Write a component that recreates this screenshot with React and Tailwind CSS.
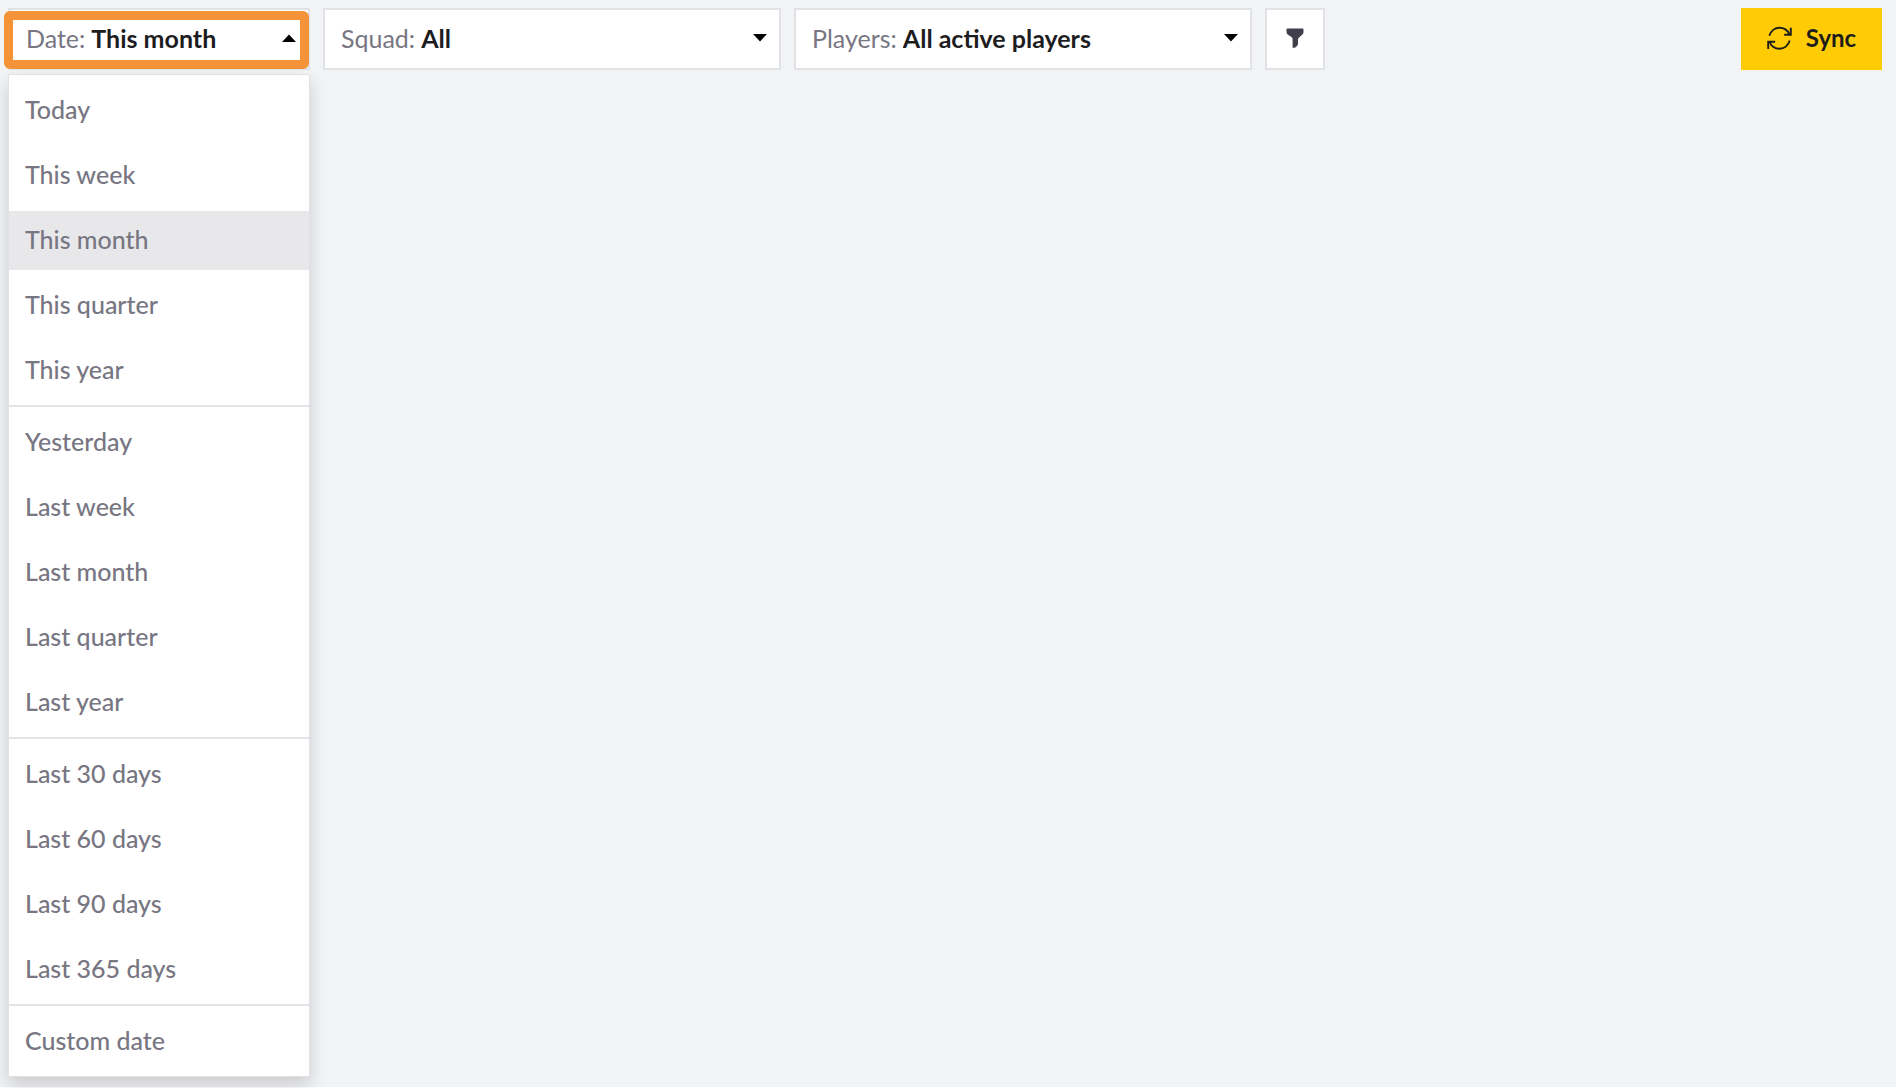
import { useState } from 'react'

const dateGroups = [
  ['Today', 'This week', 'This month', 'This quarter', 'This year'],
  ['Yesterday', 'Last week', 'Last month', 'Last quarter', 'Last year'],
  ['Last 30 days', 'Last 60 days', 'Last 90 days', 'Last 365 days'],
  ['Custom date'],
]

const Caret = ({ up }) => (
  <svg
    viewBox="0 0 14 8"
    className={up ? 'h-2 w-3.5 shrink-0 rotate-180' : 'pointer-events-none absolute right-3 h-2 w-3.5'}
    aria-hidden="true"
  >
    <path d="M0 0h14L7 7.5z" fill="#000" />
  </svg>
)

const FilterIcon = () => (
  <svg viewBox="0 0 18 20" className="h-5 w-[18px]" aria-hidden="true">
    <path
      d="M1.5 0.5h15q1 0 1 1v2.5q0 1.6-1.1 2.6l-3.6 3.2q-0.8 0.8-0.8 2v3.6q0 1.6-1 2.5l-1.4 1.3q-0.8 0.6-1.8 0.6H6.6v-8.5q0-1.2-0.8-2L1.7 6.6Q0.5 5.6 0.5 4V1.5q0-1 1-1z"
      fill="#40404c"
    />
  </svg>
)

const SyncIcon = () => (
  <svg viewBox="0 0 25 25" className="h-[25px] w-[25px]" fill="none" stroke="#1d1d1b" strokeWidth="1.9" aria-hidden="true">
    <path d="M2.3 9.8C3.8 5 7.8 1.7 12.5 1.7c4.2 0 8 2.4 9.8 6.3" />
    <path d="M23.8 1.8v6.9h-6.6" />
    <path d="M22.7 14.6c-1.4 4.8-5.4 8.1-10.2 8.1-4.2 0-8-2.4-9.8-6.3" />
    <path d="M1.2 23v-7.3h7" />
  </svg>
)

const FilterSelect = ({ id, label, options }) => (
  <div className="relative flex h-[62px] w-[458px] items-center border-2 border-[#e1e2e6] bg-white pb-0.5 pl-4">
    <label htmlFor={id} className="pr-1.5 text-[#777682]">{label}:</label>
    <select id={id} className="min-w-0 flex-1 appearance-none bg-transparent font-bold text-[#1d1d1f] outline-none">
      {options.map((option) => (
        <option key={option}>{option}</option>
      ))}
    </select>
    <Caret />
  </div>
)

const App = () => {
  const [date, setDate] = useState('This month')
  const [open, setOpen] = useState(true)

  return (
    <div className="min-h-screen border-b border-white bg-[#f2f3f5] font-['Lato','Nunito',sans-serif] text-[25px] leading-7">
      <header className="flex items-start gap-[13px] py-2 pr-3.5 pl-2">
        <div className="relative w-[302px]">
          <button
            type="button"
            aria-haspopup="listbox"
            aria-expanded={open}
            onClick={() => setOpen(!open)}
            className="flex h-[62px] w-full items-center border-2 border-[#e1e2e6] bg-white pr-3 pb-0.5 pl-4 text-left"
          >
            <span className="pr-1.5 text-[#777682]">Date:</span>
            <span className="flex-1 font-bold text-[#1d1d1f]">{date}</span>
            <Caret up />
          </button>
          {/* highlight ring around the open filter */}
          <div className="pointer-events-none absolute top-[3px] right-px bottom-px -left-1 rounded-md border-[9px] border-[#f59338]" />

          {open && (
            <div
              role="listbox"
              aria-label="Date"
              className="absolute top-[66px] left-0 w-full border border-[#e1e2e6] bg-white font-medium text-[#777682] shadow-[0_8px_16px_rgba(0,0,0,0.16)]"
            >
              {dateGroups.map((group) => (
                <div key={group[0]} className="flex flex-col gap-1.5 border-b-2 border-[#e4e5e8] pt-1.5 pb-[5px] last:border-b-0">
                  {group.map((item) => (
                    <button
                      key={item}
                      type="button"
                      role="option"
                      aria-selected={item === date}
                      onClick={() => setDate(item)}
                      className={`h-[59px] px-4 pb-1 text-left ${item === date ? 'bg-[#e8e8eb]' : 'hover:bg-[#f4f4f6]'}`}
                    >
                      {item}
                    </button>
                  ))}
                </div>
              ))}
            </div>
          )}
        </div>

        <FilterSelect id="squad" label="Squad" options={['All']} />
        <FilterSelect id="players" label="Players" options={['All active players']} />

        <button
          type="button"
          aria-label="Filters"
          className="flex h-[62px] w-[60px] items-center justify-center border-2 border-[#e1e2e6] bg-white pb-0.5"
        >
          <FilterIcon />
        </button>

        <button
          type="button"
          className="ml-auto flex h-[62px] w-[141px] items-center justify-center gap-3.5 bg-[#ffcb05] pb-0.5 text-2xl font-bold text-[#1d1d1b]"
        >
          <SyncIcon />
          Sync
        </button>
      </header>
    </div>
  )
}

export default App
